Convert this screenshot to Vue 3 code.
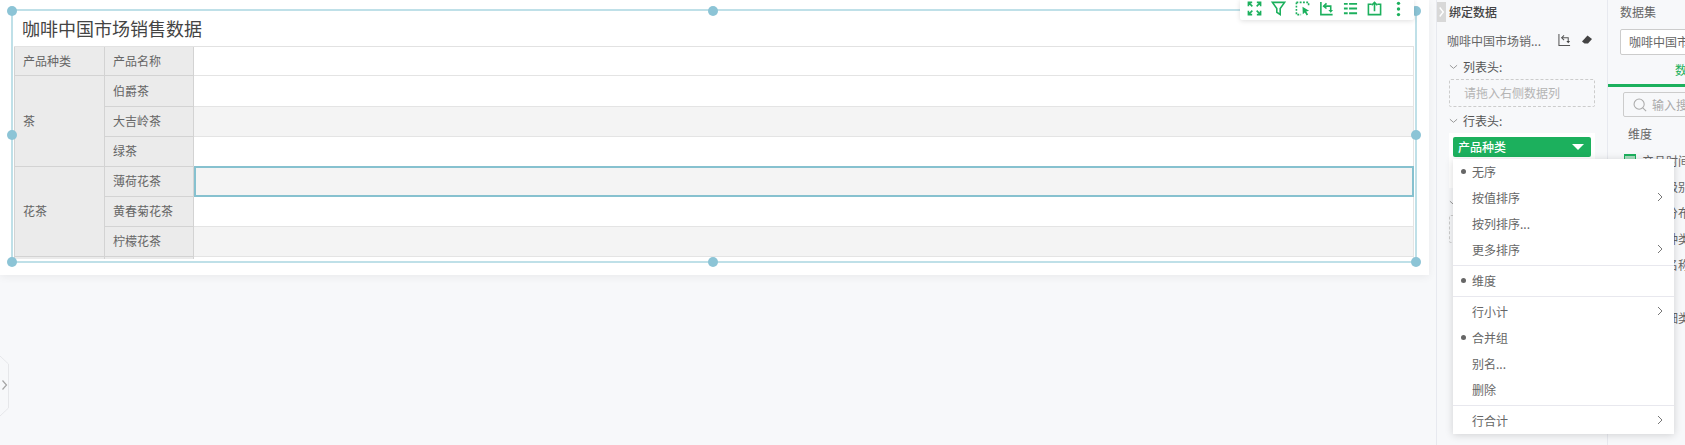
<script setup>
const handles = ['tl', 'tc', 'tr', 'ml', 'mr', 'bl', 'bc', 'br']
const fields = ['产品级别', '产品分布', '产品种类', '产品名称']
</script>

<template>
  <div class="page">
    <main class="stage">
      <section class="card">
        <h1 class="title">咖啡中国市场销售数据</h1>
        <div class="grid">
          <div class="cell head">产品种类</div>
          <div class="cell head">产品名称</div>
          <div class="cell body"></div>

          <div class="cell head group group-a">茶</div>
          <div class="cell head name-1">伯爵茶</div>
          <div class="cell body name-1"></div>
          <div class="cell head">大吉岭茶</div>
          <div class="cell body alt"></div>
          <div class="cell head">绿茶</div>
          <div class="cell body"></div>

          <div class="cell head group group-b">花茶</div>
          <div class="cell head">薄荷花茶</div>
          <div class="cell body alt selected"></div>
          <div class="cell head">黄春菊花茶</div>
          <div class="cell body"></div>
          <div class="cell head">柠檬花茶</div>
          <div class="cell body alt"></div>

          <div class="cell head"></div>
          <div class="cell head"></div>
          <div class="cell body"></div>
        </div>

        <div class="frame">
          <span v-for="h in handles" :key="h" class="handle" :class="h"></span>
        </div>

        <div class="toolbar">
          <svg viewBox="0 0 16 16" class="tool"><path d="M1.5 5.5v-4h4M1.5 1.5l4.2 4.2M10.5 1.5h4v4M14.5 1.5l-4.2 4.2M1.5 10.5v4h4M1.5 14.5l4.2-4.2M14.5 10.5v4h-4M14.5 14.5l-4.2-4.2" /></svg>
          <svg viewBox="0 0 16 16" class="tool"><path d="M1.5 1.5h13L9.8 8v6.5L6.2 12V8z" /></svg>
          <svg viewBox="0 0 16 16" class="tool"><path class="dash" d="M1.5 1.5h13v4M1.5 1.5v13h5" /><path class="solid" d="M8 6l7 4.5-3 .8 2 3.2-1.6.9-1.9-3.2-2.2 2z" /></svg>
          <svg viewBox="0 0 16 16" class="tool"><path d="M2 1v13.5h12.5" /><path d="M5 5.5h7.5V10" /><path d="M8 2.5L5 5.5 8 8" /><path class="solid" d="M10 9.5h5l-2.5 3z" /></svg>
          <svg viewBox="0 0 16 16" class="tool"><path d="M1 3h4M6.500 3H15M1 8h4M6.500 8H15M1 13h4M6.500 13H15" stroke-width="2" /></svg>
          <svg viewBox="0 0 16 16" class="tool"><path d="M5 3.5H1.5v11h13v-11H11" /><path d="M8 11V1.5M5 4.5l3-3 3 3" /></svg>
          <svg viewBox="0 0 16 16" class="tool"><circle class="solid" cx="8" cy="2.5" r="1.8" /><circle class="solid" cx="8" cy="8.5" r="1.8" /><circle class="solid" cx="8" cy="14.5" r="1.8" /></svg>
        </div>
      </section>

      <svg class="edge" viewBox="0 0 10 60">
        <path class="edge-line" d="M0 0l8.5 8v44L0 60" />
        <path class="edge-arrow" d="M2.5 24.500l4 4.500-4 4.500" />
      </svg>
    </main>

    <aside class="bind">
      <div class="bind-head">
        <span class="collapse">
          <svg viewBox="0 0 10 20"><path d="M3 5l4 5-4 5" /></svg>
        </span>
        <span class="bind-title">绑定数据</span>
      </div>

      <div class="source">
        <span class="source-name">咖啡中国市场销...</span>
        <svg viewBox="0 0 14 14" class="mini swap"><path d="M1 0v12.500h12" /><path d="M4 4h7v4" /><path d="M6.500 1.500L4 4l2.500 2.500" /><path class="mini-fill" d="M9 7.500h4L11 10z" /></svg>
        <svg viewBox="0 0 12 12" class="mini erase"><path class="mini-fill" d="M6.500 1.500L11 5 7 9.500H3.500L1 7.500z" /></svg>
      </div>

      <div class="section-label">
        <svg viewBox="0 0 10 6" class="chev"><path d="M1 1l4 3.500L9 1" /></svg>
        <span>列表头:</span>
      </div>
      <div class="drop">请拖入右侧数据列</div>

      <div class="section-label">
        <svg viewBox="0 0 10 6" class="chev"><path d="M1 1l4 3.500L9 1" /></svg>
        <span>行表头:</span>
      </div>
      <div class="well">
        <div class="pill">
          <span>产品种类</span>
          <i class="caret"></i>
        </div>
      </div>

      <div class="section-label">
        <svg viewBox="0 0 10 6" class="chev"><path d="M1 1l4 3.500L9 1" /></svg>
      </div>
      <div class="drop"></div>
    </aside>

    <aside class="dataset">
      <div class="ds-title">数据集</div>
      <div class="ds-select">咖啡中国市场销售数据</div>
      <div class="ds-tab">数据</div>
      <div class="ds-search">
        <svg viewBox="0 0 16 16" class="search-icon"><circle cx="7" cy="7" r="5.800" /><path d="M11.200 11.200l3.800 3.800" /></svg>
        <span>输入搜索</span>
      </div>
      <div class="ds-group">维度</div>
      <div class="ds-item first">
        <svg viewBox="0 0 12 12" class="cal"><path class="cal-fill" d="M0 0h12v12H0z" /><path class="cal-top" d="M0 0h12v2H0z" /><path class="cal-box" d="M.500.500h11v11H.500z" /></svg>
        <span>产品时间</span>
      </div>
      <div v-for="f in fields" :key="f" class="ds-item"><span>{{ f }}</span></div>
      <div class="ds-item last"><span>产品细类</span></div>
    </aside>

    <div class="menu">
      <div class="menu-sec sec-1">
        <div class="mi"><i class="dot"></i>无序</div>
        <div class="mi">按值排序<svg viewBox="0 0 6 10" class="more"><path d="M1 1l4 4-4 4" /></svg></div>
        <div class="mi">按列排序...</div>
        <div class="mi">更多排序<svg viewBox="0 0 6 10" class="more"><path d="M1 1l4 4-4 4" /></svg></div>
      </div>
      <div class="menu-sec sec-2">
        <div class="mi"><i class="dot"></i>维度</div>
      </div>
      <div class="menu-sec sec-3">
        <div class="mi">行小计<svg viewBox="0 0 6 10" class="more"><path d="M1 1l4 4-4 4" /></svg></div>
        <div class="mi"><i class="dot"></i>合并组</div>
        <div class="mi">别名...</div>
        <div class="mi">删除</div>
      </div>
      <div class="menu-sec sec-4">
        <div class="mi">行合计<svg viewBox="0 0 6 10" class="more"><path d="M1 1l4 4-4 4" /></svg></div>
      </div>
    </div>
  </div>
</template>

<style scoped>
.page {
  position: relative;
  display: flex;
  width: 1685px;
  height: 445px;
  overflow: hidden;
  background: #f7f8fa;
  color: #666;
  font-family: "Noto Sans CJK SC", "Noto Sans", sans-serif;
  font-size: 12px;
}
.stage {
  position: relative;
  flex: 0 0 1436px;
}
.card {
  position: relative;
  width: 1429px;
  height: 275px;
  background: #fff;
  box-shadow: 0 2px 8px rgba(0, 0, 0, 0.06);
}
.title {
  margin: 0;
  height: 46px;
  padding: 16px 0 0 22px;
  box-sizing: border-box;
  font-size: 18px;
  font-weight: 400;
  line-height: 24px;
  color: #444;
}
.grid {
  display: grid;
  width: 1400px;
  height: 213px;
  margin-left: 14px;
  overflow: hidden;
  grid-template-columns: 91px 89px 1fr;
  grid-template-rows: 29px 31px 30px 30px 30px 30px 30px 30px;
  border-top: 1px solid #e2e2e2;
  box-sizing: border-box;
}
.cell {
  display: flex;
  align-items: center;
  padding: 0 0 2px 8px;
  box-sizing: border-box;
  border-right: 1px solid #e4e4e4;
  border-bottom: 1px solid #e4e4e4;
}
.head {
  background: #ebebeb;
  border-right-color: #d3d3d3;
  border-bottom-color: #d3d3d3;
}
.grid > .head:nth-child(1),
.group {
  border-left: 1px solid #d3d3d3;
}
.grid > .head:nth-last-child(3) {
  border-left: 1px solid #d3d3d3;
}
.group-a,
.group-b {
  grid-row: span 3;
  grid-column: 1;
}
.alt {
  background: #f4f4f4;
}
.selected {
  border: 2px solid #86c1cf;
  margin-top: -1px;
}
.frame {
  position: absolute;
  left: 11px;
  top: 9px;
  width: 1406px;
  height: 254px;
  box-sizing: border-box;
  border: 2px solid #bfe0e8;
  pointer-events: none;
}
.handle {
  position: absolute;
  width: 10px;
  height: 10px;
  border-radius: 50%;
  background: #8cc4d6;
}
.tl { left: -6px; top: -5px; }
.tc { left: 695px; top: -5px; }
.tr { right: -6px; top: -5px; }
.ml { left: -6px; top: 119px; }
.mr { right: -6px; top: 119px; }
.bl { left: -6px; bottom: -6px; }
.bc { left: 695px; bottom: -6px; }
.br { right: -6px; bottom: -6px; }
.toolbar {
  position: absolute;
  left: 1240px;
  top: 0;
  display: flex;
  align-items: center;
  gap: 9px;
  width: 174px;
  height: 20px;
  padding-left: 7px;
  box-sizing: border-box;
  background: #fff;
  box-shadow: 0 1px 5px rgba(0, 0, 0, 0.13);
  border-radius: 0 0 2px 2px;
}
.tool {
  flex: 0 0 15px;
  width: 15px;
  height: 15px;
  margin-top: -3px;
  overflow: visible;
  fill: none;
  stroke: #1cb05d;
  stroke-width: 1.700;
}
.tool .solid {
  fill: #1cb05d;
  stroke: none;
}
.tool .dash {
  stroke-dasharray: 2 1.500;
}
.edge {
  position: absolute;
  left: 0;
  top: 356px;
  width: 10px;
  height: 60px;
  fill: none;
}
.edge-line {
  stroke: #e6e7ea;
}
.edge-arrow {
  stroke: #a4a4a4;
  stroke-width: 1.200;
}

.bind {
  flex: 0 0 171px;
  box-sizing: border-box;
  border-left: 1px solid #e7e9ef;
  padding-top: 2px;
}
.bind-head {
  display: flex;
  align-items: center;
  height: 20px;
}
.collapse {
  display: flex;
  width: 9px;
  height: 20px;
  background: #d8d8d8;
}
.collapse svg {
  width: 9px;
  height: 20px;
  fill: none;
  stroke: #fff;
  stroke-width: 1.500;
}
.bind-title {
  margin-left: 3px;
  padding-bottom: 2px;
  font-weight: 500;
  color: #444;
}
.source {
  display: flex;
  align-items: center;
  height: 20px;
  margin-top: 8px;
  padding-left: 10px;
}
.source-name {
  width: 111px;
}
.mini {
  fill: none;
  stroke: #555;
  stroke-width: 1.100;
}
.mini-fill {
  fill: #444;
  stroke: none;
}
.swap {
  width: 13px;
  height: 13px;
}
.erase {
  width: 12px;
  height: 12px;
  margin-left: 10px;
}
.section-label {
  display: flex;
  align-items: center;
  height: 20px;
  margin-top: 7px;
  padding-left: 12px;
  color: #555;
}
.section-label span {
  padding-bottom: 2px;
}
.chev {
  width: 9px;
  height: 6px;
  margin-right: 5px;
  fill: none;
  stroke: #999;
  stroke-width: 1.100;
}
.drop {
  width: 146px;
  height: 28px;
  margin: 2px 0 0 12px;
  padding-left: 14px;
  box-sizing: border-box;
  border: 1px dashed #ccc;
  border-radius: 2px;
  line-height: 26px;
  color: #b4b4b4;
}
.section-label + .well {
  margin-top: 2px;
}
.drop + .section-label {
  margin-top: 4px;
}
.well {
  width: 146px;
  height: 55px;
  margin-left: 12px;
  padding: 4px;
  box-sizing: border-box;
  background: #fff;
}
.well + .section-label {
  margin-top: 5px;
}
.pill {
  display: flex;
  align-items: center;
  justify-content: space-between;
  height: 20px;
  padding: 0 7px 2px 5px;
  box-sizing: border-box;
  background: #1cb05d;
  border-radius: 2px;
  color: #fff;
  font-weight: 500;
}
.caret {
  width: 0;
  height: 0;
  margin-top: 2px;
  border-left: 6px solid transparent;
  border-right: 6px solid transparent;
  border-top: 6px solid #fff;
}

.dataset {
  flex: 1;
  min-width: 0;
  overflow: hidden;
  box-sizing: border-box;
  border-left: 1px solid #e7e9ef;
}
.ds-title {
  height: 24px;
  margin-left: 12px;
  line-height: 24px;
  white-space: nowrap;
}
.ds-select {
  width: 260px;
  height: 26px;
  margin: 5px 0 0 12px;
  padding-left: 8px;
  box-sizing: border-box;
  border: 1px solid #ccc;
  border-radius: 2px;
  background: #fff;
  line-height: 24px;
  white-space: nowrap;
}
.ds-tab {
  width: 260px;
  height: 32px;
  padding-left: 67px;
  box-sizing: border-box;
  border-bottom: 3px solid #1cb05d;
  line-height: 30px;
  color: #1cb05d;
  white-space: nowrap;
}
.ds-search {
  display: flex;
  align-items: center;
  width: 260px;
  height: 25px;
  margin: 5px 0 0 15px;
  padding-left: 9px;
  box-sizing: border-box;
  border: 1px solid #ccc;
  border-radius: 2px;
  color: #aaa;
  white-space: nowrap;
}
.search-icon {
  flex: none;
  width: 14px;
  height: 14px;
  margin-right: 5px;
  fill: none;
  stroke: #aaa;
  stroke-width: 1.200;
}
.ds-group {
  height: 23px;
  margin: 7px 0 0 20px;
  line-height: 20px;
}
.ds-item {
  display: flex;
  align-items: center;
  height: 26px;
  padding-left: 34px;
  white-space: nowrap;
}
.ds-item.first {
  padding-left: 16px;
  gap: 6px;
}
.ds-item.last {
  margin-top: 27px;
}
.cal {
  flex: none;
  width: 12px;
  height: 12px;
}
.cal-fill {
  fill: #a6dcbd;
}
.cal-top {
  fill: #1cb05d;
}
.cal-box {
  fill: none;
  stroke: #1cb05d;
}

.menu {
  position: absolute;
  left: 1453px;
  top: 159px;
  width: 221px;
  background: #fff;
  box-shadow: 0 1px 8px rgba(0, 0, 0, 0.16);
}
.menu-sec + .menu-sec {
  border-top: 1px solid #e8e8ee;
}
.sec-1 { padding-bottom: 2px; }
.sec-2 { padding: 2px 0; }
.sec-3 { padding: 2px 0; }
.sec-4 { padding: 2px 0 0; }
.mi {
  position: relative;
  display: flex;
  align-items: center;
  height: 26px;
  padding: 0 0 2px 19px;
  box-sizing: border-box;
}
.dot {
  position: absolute;
  left: 8px;
  top: 10px;
  width: 5px;
  height: 5px;
  border-radius: 50%;
  background: #666;
}
.more {
  position: absolute;
  right: 11px;
  top: 7px;
  width: 6px;
  height: 10px;
  fill: none;
  stroke: #777;
}
</style>
